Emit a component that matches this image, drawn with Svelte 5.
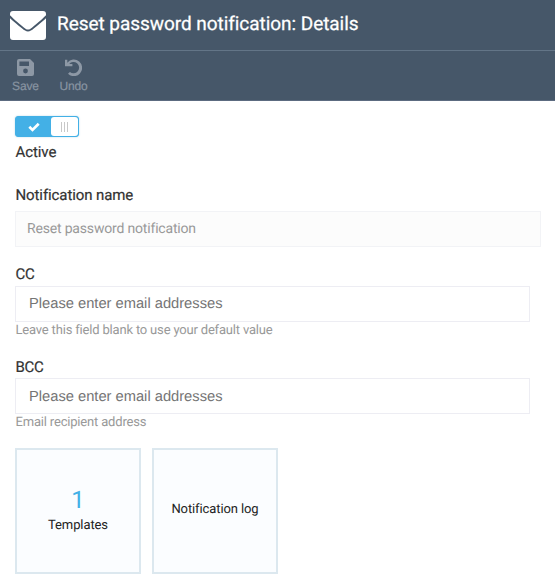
<script>
  let active = $state(true);
  const recipients = [
    { id: 'cc', label: 'CC', hint: 'Leave this field blank to use your default value' },
    { id: 'bcc', label: 'BCC', hint: 'Email recipient address' }
  ];
</script>

<div class="blade">
  <header>
    <svg class="mail" viewBox="0 0 36 29" aria-hidden="true">
      <path d="M3 0H33Q36 0 36 3V4.2C33.5 7 28.5 11.3 22.2 16.4C20.8 17.6 19.5 18.6 18 18.6S15.2 17.6 13.8 16.4C7.5 11.3 2.5 7 0 4.2V3Q0 0 3 0Z" />
      <path d="M0 7.2C3.4 10.3 8 14.2 12.2 17.5C14.1 19.1 16 20.5 18 20.5S21.9 19.1 23.8 17.5C28 14.2 32.6 10.3 36 7.2V26Q36 29 33 29H3Q0 29 0 26Z" />
    </svg>
    <h1>Reset password notification: Details</h1>
  </header>
  <nav>
    <button class="save">
      <svg viewBox="0 0 17 17" aria-hidden="true"><path fill-rule="evenodd" d="M2 0H13L17 4V15Q17 17 15 17H2Q0 17 0 15V2Q0 0 2 0ZM2.4 2.5V7H12V2.5ZM8.5 9.6A2.4 2.4 0 1 0 8.5 14.4A2.4 2.4 0 1 0 8.5 9.6Z" /></svg>
      <span>Save</span>
    </button>
    <button class="undo">
      <svg viewBox="0 0 17 17" aria-hidden="true"><path d="M0 .8H2.3V3.7A8.3 8.3 0 1 1 3 14.8L4.9 12.9A5.6 5.6 0 1 0 4.2 5H7.4V7.3H0Z" /></svg>
      <span>Undo</span>
    </button>
  </nav>

  <main>
    <button class="switch" class:off={!active} aria-label="Active" onclick={() => (active = !active)}>
      <svg viewBox="0 0 12 10" aria-hidden="true"><path d="M1.3 4.8L4.5 7.9L10.7 1.7" /></svg>
      <span class="knob"><i></i><i></i><i></i></span>
    </button>
    <div class="active-label">Active</div>

    <label class="name-label" for="name">Notification name</label>
    <input class="name" id="name" value="Reset password notification" disabled />

    {#each recipients as field}
      <section class={field.id}>
        <label for={field.id}>{field.label}</label>
        <input id={field.id} placeholder="Please enter email addresses" />
        <p>{field.hint}</p>
      </section>
    {/each}

    <div class="tiles">
      <div class="tile"><strong>1</strong><span class="templates">Templates</span></div>
      <div class="tile"><span class="log">Notification log</span></div>
    </div>
  </main>
</div>

<style>
  :global(body) { background: #fff; }
  .blade, .blade * { box-sizing: border-box; text-rendering: geometricPrecision; }
  .blade { height: 575px; overflow: hidden; font-family: Roboto, sans-serif; color: #333; }
  header { height: 51px; background: #465769; border-bottom: 1px solid #637587; display: flex; padding: 11px 0 0 10px; }
  .mail { width: 36px; height: 29px; fill: #fff; }
  h1 { margin: 1px 0 0 11px; font-size: 19px; line-height: 24px; font-weight: 400; letter-spacing: -.05px; color: #fff; -webkit-text-stroke: .25px #fff; white-space: nowrap; }
  nav { height: 50px; background: #465769; border-bottom: 1px solid #5c6b80; display: flex; padding: 8px 0 0 10px; }
  button { border: 0; padding: 0; margin: 0; background: none; font: inherit; }
  nav button { display: flex; flex-direction: column; align-items: center; color: #8894a1; font: 12px/16px "Liberation Sans", sans-serif; }
  nav svg { width: 17px; height: 17px; fill: #8d98a5; margin-bottom: 2px; }
  nav span { letter-spacing: -.15px; -webkit-text-stroke: .2px #8894a1; }
  .save { width: 31px; }
  .undo { width: 33px; margin-left: 16px; }
  main { padding: 15px 15px 0; }
  .switch { display: flex; align-items: center; width: 64px; height: 21px; border: 1px solid #43b0e6; border-radius: 3px; background: #43b0e6; padding-left: 12px; box-shadow: 0 0 2px #b8d9e9; }
  .switch.off { background: #ccc; }
  .switch svg { width: 12px; height: 10px; fill: none; stroke: #fff; stroke-width: 2.7; }
  .knob { margin-left: auto; width: 27px; height: 19px; border-radius: 3px; background: #fff; display: flex; justify-content: center; align-items: center; gap: 2px; }
  .knob i { width: 1px; height: 10px; background: #c8c8c8; }
  .active-label { margin-top: 6px; padding-left: .5px; font-size: 15px; line-height: 18px; letter-spacing: -.08px; -webkit-text-stroke: .2px #333; }
  label { display: block; padding-left: .5px; font-size: 15px; line-height: 18px; letter-spacing: -.1px; -webkit-text-stroke: .2px #333; }
  .name-label { margin-top: 25px; }
  section label { letter-spacing: -.25px; }
  input { display: block; height: 36px; border: 1px solid #ededf3; border-radius: 0; margin: 0; outline: 0; }
  .name { width: 526px; margin-top: 7px; padding: 0 11px 1px; background: #fcfcfc; border-color: #f2f3f6; color: #999; font: 14px Roboto, sans-serif; letter-spacing: -.18px; }
  .cc { margin-top: 18px; }
  .bcc { margin-top: 19px; }
  section input { width: 515px; margin-top: 3px; padding: 0 13px; font: 14.7px "Liberation Sans", sans-serif; background: #fff; }
  section.bcc input { margin-top: 2px; padding-top: 1px; }
  section input::placeholder { color: #757575; opacity: 1; }
  p { margin: 0; padding: 1px 0 0 .5px; height: 17px; font-size: 13px; line-height: 16px; letter-spacing: -.18px; color: #999; }
  .tiles { display: flex; gap: 11px; margin-top: 17px; }
  .tile { width: 126px; height: 126px; border: 2px solid #dce8ef; background: #fbfdff; display: flex; flex-direction: column; align-items: center; justify-content: center; padding-bottom: 2px; font-size: 13px; line-height: 16px; letter-spacing: -.1px; color: #222; }
  strong { font-size: 24px; font-weight: 400; line-height: 26px; color: #43b0e6; margin: 1px 0 5px; }
</style>
